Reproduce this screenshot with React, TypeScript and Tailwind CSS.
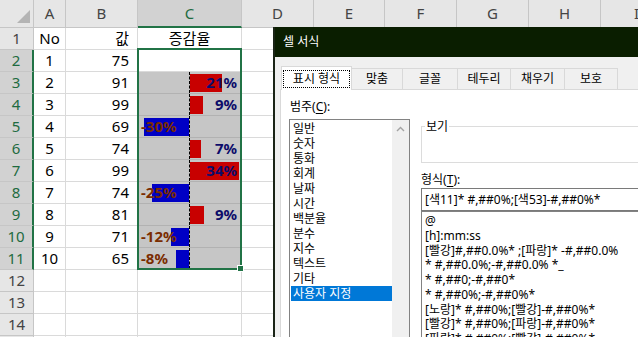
import type { ReactNode } from "react"

type DataRow = { no: number; value: number; pct: number | null; bar: number }

const ROWS: DataRow[] = [
  { no: 1, value: 75, pct: null, bar: 0 },
  { no: 2, value: 91, pct: 21, bar: 32 },
  { no: 3, value: 99, pct: 9, bar: 13 },
  { no: 4, value: 69, pct: -30, bar: 45 },
  { no: 5, value: 74, pct: 7, bar: 11 },
  { no: 6, value: 99, pct: 34, bar: 49 },
  { no: 7, value: 74, pct: -25, bar: 37 },
  { no: 8, value: 81, pct: 9, bar: 14 },
  { no: 9, value: 71, pct: -12, bar: 18 },
  { no: 10, value: 65, pct: -8, bar: 13 },
]

const COLS = ["A", "B", "C", "D", "E", "F", "G", "H", "I"]
const EMPTY_COLS = ["D", "E", "F", "G", "H", "I"]
const ROW_COUNT = 15

const CATEGORIES = [
  "일반",
  "숫자",
  "통화",
  "회계",
  "날짜",
  "시간",
  "백분율",
  "분수",
  "지수",
  "텍스트",
  "기타",
  "사용자 지정",
]

const FORMATS = [
  "@",
  "[h]:mm:ss",
  "[빨강]#,##0.0%* ;[파랑]* -#,##0.0%",
  "* #,##0.0%;-#,##0.0% *_",
  "* #,##0;-#,##0*",
  "* #,##0%;-#,##0%*",
  "[노랑]* #,##0%;[빨강]-#,##0%*",
  "[빨강]* #,##0%;[파랑]-#,##0%*",
  "[파랑]* #,##0%;[빨강]-#,##0%*",
]

const TABS = [
  { label: "맞춤", w: "w-[51px]" },
  { label: "글꼴", w: "w-[55px]" },
  { label: "테두리", w: "w-[53px]" },
  { label: "채우기", w: "w-[54px]" },
  { label: "보호", w: "w-[53px]" },
]

function Cell({ className = "", children }: { className?: string; children?: ReactNode }) {
  return <div className={`border-r border-b border-[#dadada] ${className}`}>{children}</div>
}

function DataBarCell({ row }: { row: DataRow }) {
  const pct = row.pct ?? 0
  const negative = pct < 0
  return (
    <div className="relative flex border-r border-b border-r-[#dadada] border-b-[#b2b2b2] bg-[#c6c6c6]">
      <div className="flex w-[51px] items-center justify-end">
        {negative && <div className="h-[18px] bg-[#0000c4]" style={{ width: row.bar }} />}
      </div>
      <div className="w-px border-l border-dashed border-black" />
      <div className="flex flex-1 items-center">
        {!negative && <div className="h-[18px] bg-[#c80000]" style={{ width: row.bar }} />}
      </div>
      {negative ? (
        <span className="absolute inset-y-0 left-[3px] flex items-center font-bold text-[#7a2c00]">
          {pct}%
        </span>
      ) : (
        <span className="absolute inset-y-0 right-[4px] flex items-center font-bold text-[#0c0c6a]">
          {pct}%
        </span>
      )}
    </div>
  )
}

function Sheet() {
  const bodyRows = Array.from({ length: ROW_COUNT }, (_, i) => i + 1)
  return (
    <div className="grid grid-cols-[34px_32px_72px_104px_72px_71px_72px_72px_72px_72px] grid-rows-[28px_repeat(15,22px)] text-[15px] leading-none text-black">
      <div className="relative border-r border-b border-[#c6c6c6] bg-[#e6e6e6]">
        <div className="absolute right-[3px] bottom-[4px] h-0 w-0 border-b-[13px] border-l-[13px] border-b-[#b4b4b4] border-l-transparent" />
      </div>
      {COLS.map((c) =>
        c === "C" ? (
          <div
            key={c}
            className="flex items-center justify-center border-r border-b-2 border-r-[#c6c6c6] border-b-[#217346] bg-[#d2d2d2] text-[#1e6b40]"
          >
            {c}
          </div>
        ) : (
          <div
            key={c}
            className="flex items-center justify-center border-r border-b border-[#c6c6c6] bg-[#e6e6e6] text-[#444]"
          >
            {c}
          </div>
        ),
      )}

      {bodyRows.map((r) => {
        const data = r >= 2 && r <= 11 ? ROWS[r - 2] : null
        const selected = data !== null
        return [
          selected ? (
            <div
              key={`h${r}`}
              className="flex items-center justify-center border-r-2 border-b border-r-[#217346] border-b-[#c6c6c6] bg-[#d2d2d2] text-[#1e6b40]"
            >
              {r}
            </div>
          ) : (
            <div
              key={`h${r}`}
              className="flex items-center justify-center border-r border-b border-[#c6c6c6] bg-[#e6e6e6] text-[#444]"
            >
              {r}
            </div>
          ),
          <Cell key={`a${r}`} className="flex items-center justify-center">
            {r === 1 ? "No" : data?.no}
          </Cell>,
          <Cell key={`b${r}`} className="flex items-center justify-end pr-[8px]">
            {r === 1 ? "값" : data?.value}
          </Cell>,
          data && data.pct !== null ? (
            <DataBarCell key={`c${r}`} row={data} />
          ) : (
            <Cell key={`c${r}`} className="flex items-center justify-center">
              {r === 1 ? "증감율" : null}
            </Cell>
          ),
          ...EMPTY_COLS.map((c) => <Cell key={`${c}${r}`} />),
        ]
      })}
    </div>
  )
}

function FormatDialog() {
  return (
    <div className="absolute top-[27px] left-[273px] flex h-[340px] w-[430px] flex-col border-l-2 border-[#1a2416] text-[12px] text-black">
      <div className="flex h-[30px] items-center bg-[#0a1e00] pl-[8px] leading-none text-white">셀 서식</div>
      <div className="flex flex-1 flex-col bg-[#f0f0f0] pt-[9px] pl-[5px]">
        <div className="relative z-10 -mb-px flex h-[24px] items-end">
          <div className="ml-px flex h-[24px] w-[71px] border border-b-0 border-[#d9d9d9] bg-white px-[1px] pt-[3px] pb-[2px]">
            <div className="flex flex-1 items-center justify-center border border-dotted border-black leading-none">
              표시 형식
            </div>
          </div>
          {TABS.map((t) => (
            <div
              key={t.label}
              className={`flex h-[22px] items-center justify-center border-t border-r border-b border-[#d9d9d9] bg-[#f0f0f0] leading-none ${t.w}`}
            >
              {t.label}
            </div>
          ))}
        </div>
        <div className="flex flex-1 border border-[#d9d9d9] bg-white">
          <div className="flex w-[129px] flex-col pl-[8px]">
            <div className="mt-[9px] pl-[1px] leading-[15px]">
              범주(<span className="underline underline-offset-2">C</span>):
            </div>
            <div className="mt-[5px] flex flex-1 border border-[#828282]">
              <div className="flex flex-1 flex-col pt-[1px] pl-[1px]">
                {CATEGORIES.map((c, i) =>
                  i === CATEGORIES.length - 1 ? (
                    <div key={c} className="h-[15px] bg-[#0078d7] pl-[2px] leading-[15px] text-white">
                      {c}
                    </div>
                  ) : (
                    <div key={c} className="h-[15px] pl-[2px] leading-[15px]">
                      {c}
                    </div>
                  ),
                )}
              </div>
              <div className="w-[17px] bg-[#f0f0f0]">
                <div className="flex h-[17px] items-center justify-center">
                  <svg width="9" height="6" viewBox="0 0 9 6">
                    <polyline points="1,5 4.5,1.5 8,5" fill="none" stroke="#a3a3a3" strokeWidth="1.4" />
                  </svg>
                </div>
              </div>
            </div>
          </div>
          <div className="ml-[11px] flex min-w-0 flex-1 flex-col pr-[10px]">
            <div className="relative mt-[36px] h-[37px] border border-[#dcdcdc]">
              <span className="absolute -top-[8px] left-[3px] bg-white px-px leading-[15px]">보기</span>
            </div>
            <div className="mt-[9px] leading-[15px]">
              형식(<span className="underline underline-offset-2">T</span>):
            </div>
            <div className="mt-px flex h-[23px] items-center border border-[#7a7a7a] pl-[3px] whitespace-nowrap">
              [색11]* #,##0%;[색53]-#,##0%*
            </div>
            <div className="flex-1 border border-[#828282] pt-[2px] pl-[3px]">
              {FORMATS.map((f) => (
                <div key={f} className="h-[14.75px] leading-[14.75px] whitespace-nowrap">
                  {f}
                </div>
              ))}
            </div>
          </div>
        </div>
      </div>
    </div>
  )
}

export default function App() {
  return (
    <div className="relative h-[337px] w-[638px] overflow-hidden bg-white font-['Noto_Sans','Noto_Sans_CJK_KR',sans-serif]">
      <Sheet />
      {/* selection outline + fill handle around C2:C11 */}
      <div className="pointer-events-none absolute top-[48px] left-[137px] h-[222px] w-[105px] border-2 border-[#217346]" />
      <div className="absolute top-[265px] left-[237px] h-[7px] w-[7px] border border-white bg-[#217346]" />
      <FormatDialog />
    </div>
  )
}
